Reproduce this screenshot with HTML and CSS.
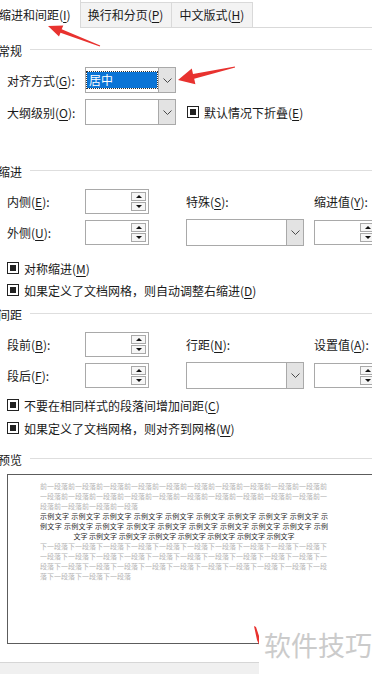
FILE: index.html
```html
<!DOCTYPE html>
<html lang="zh-CN">
<head>
  <meta charset="UTF-8">
  <meta name="viewport" content="width=device-width, initial-scale=1.0">
  <title>段落</title>
  <link rel="stylesheet" href="styles.css">
</head>
<body>
  <div class="dialog">
    <div class="tabs">
      <div class="tab active">缩进和间距(<u>I</u>)</div>
      <div class="tab">换行和分页(<u>P</u>)</div>
      <div class="tab">中文版式(<u>H</u>)</div>
    </div>

    <div class="content">
      <div class="group-title">常规</div>
      <div class="grid general">
        <label>对齐方式(<u>G</u>):</label>
        <div class="select">
          <span class="value"><span class="selected">居中</span></span>
          <span class="drop"><svg width="9" height="5" viewBox="0 0 9 5"><path d="M0.5 0.5 L4.5 4.5 L8.5 0.5" fill="none" stroke="#4a4a4a"/></svg></span>
        </div>
        <span></span>
        <label>大纲级别(<u>O</u>):</label>
        <div class="select">
          <span class="value"></span>
          <span class="drop"><svg width="9" height="5" viewBox="0 0 9 5"><path d="M0.5 0.5 L4.5 4.5 L8.5 0.5" fill="none" stroke="#4a4a4a"/></svg></span>
        </div>
        <div class="check"><span class="box"></span><span>默认情况下折叠(<u>E</u>)</span></div>
      </div>

      <div class="group-title indent-title">缩进</div>
      <div class="grid fields">
        <label>内侧(<u>E</u>):</label>
        <div class="spin"><span class="spin-btns"><span class="up"></span><span class="down"></span></span></div>
        <label>特殊(<u>S</u>):</label>
        <label>缩进值(<u>Y</u>):</label>
        <label>外侧(<u>U</u>):</label>
        <div class="spin"><span class="spin-btns"><span class="up"></span><span class="down"></span></span></div>
        <div class="select wide">
          <span class="value"></span>
          <span class="drop"><svg width="9" height="5" viewBox="0 0 9 5"><path d="M0.5 0.5 L4.5 4.5 L8.5 0.5" fill="none" stroke="#4a4a4a"/></svg></span>
        </div>
        <div class="spin"><span class="spin-btns"><span class="up"></span><span class="down"></span></span></div>
      </div>
      <div class="checks first">
        <div class="check"><span class="box"></span><span>对称缩进(<u>M</u>)</span></div>
        <div class="check"><span class="box"></span><span>如果定义了文档网格，则自动调整右缩进(<u>D</u>)</span></div>
      </div>

      <div class="group-title">间距</div>
      <div class="grid fields">
        <label>段前(<u>B</u>):</label>
        <div class="spin"><span class="spin-btns"><span class="up"></span><span class="down"></span></span></div>
        <label>行距(<u>N</u>):</label>
        <label>设置值(<u>A</u>):</label>
        <label>段后(<u>F</u>):</label>
        <div class="spin"><span class="spin-btns"><span class="up"></span><span class="down"></span></span></div>
        <div class="select wide">
          <span class="value"></span>
          <span class="drop"><svg width="9" height="5" viewBox="0 0 9 5"><path d="M0.5 0.5 L4.5 4.5 L8.5 0.5" fill="none" stroke="#4a4a4a"/></svg></span>
        </div>
        <div class="spin"><span class="spin-btns"><span class="up"></span><span class="down"></span></span></div>
      </div>
      <div class="checks">
        <div class="check"><span class="box"></span><span>不要在相同样式的段落间增加间距(<u>C</u>)</span></div>
        <div class="check"><span class="box"></span><span>如果定义了文档网格，则对齐到网格(<u>W</u>)</span></div>
      </div>

      <div class="group-title preview-title">预览</div>
      <div class="preview">
        <div class="pv-line muted">前一段落前一段落前一段落前一段落前一段落前一段落前一段落前一段落前一段落前一段落前</div>
        <div class="pv-line muted">一段落前一段落前一段落前一段落前一段落前一段落前一段落前一段落前一段落前一段落前一</div>
        <div class="pv-line muted">段落前一段落前一段落前一段落</div>
        <div class="pv-line sample full">示例文字 示例文字 示例文字 示例文字 示例文字 示例文字 示例文字 示例文字 示例文字 示</div>
        <div class="pv-line sample full">例文字 示例文字 示例文字 示例文字 示例文字 示例文字 示例文字 示例文字 示例文字 示例</div>
        <div class="pv-line sample center">文字 示例文字 示例文字 示例文字 示例文字 示例文字 示例文字 示例文字</div>
        <div class="pv-line muted">下一段落下一段落下一段落下一段落下一段落下一段落下一段落下一段落下一段落下一段落下</div>
        <div class="pv-line muted">一段落下一段落下一段落下一段落下一段落下一段落下一段落下一段落下一段落下一段落下一</div>
        <div class="pv-line muted">段落下一段落下一段落下一段落下一段落下一段落下一段落下一段落下一段落下一段落下一段</div>
        <div class="pv-line muted">落下一段落下一段落下一段落</div>
      </div>
    </div>

    <div class="footer"></div>

    <!-- red annotation arrows drawn on top of the screenshot -->
    <svg class="marks" width="372" height="675" viewBox="0 0 372 675">
      <polygon fill="#e8322f" points="48,26 63.3,25.4 61.7,29.3 100.2,45.5 99.8,46.5 60.5,32.7 59,36.6"/>
      <polygon fill="#e8322f" points="178,80 191.8,68.6 193,74 234.9,66.5 235.1,67.5 194.2,78.8 195.4,84.2"/>
      <polygon fill="#e8322f" points="254,626 256,627 260,639 260,647 257,640"/>
    </svg>
    <div class="watermark">软件技巧</div>
  </div>
</body>
</html>
```

FILE: styles.css
```css
* {
  box-sizing: border-box;
}
body {
  margin: 0;
  background: #fff;
  font-family: "Noto Sans CJK SC", sans-serif;
  font-size: 12px;
  color: #1a1a1a;
}
u {
  text-decoration-thickness: 1px;
  text-underline-offset: 2px;
}
.dialog {
  position: relative;
  width: 372px;
  height: 675px;
  overflow: hidden;
}
.tabs {
  display: flex;
  align-items: flex-end;
  height: 28px;
  border-bottom: 1px solid #d9d9d9;
}
.tab {
  height: 25px;
  line-height: 23px;
  padding: 0 8px 0 7px;
  background: #f3f3f3;
  border-top: 1px solid #d9d9d9;
  border-right: 1px solid #d9d9d9;
  white-space: nowrap;
}
.tab.active {
  height: 28px;
  line-height: 29px;
  margin-bottom: -1px;
  margin-left: -1px;
  padding: 0 9px 0 0;
  background: #fff;
  border-top: none;
}
.content {
  padding-left: 7px;
}
.group-title {
  display: flex;
  align-items: center;
  gap: 8px;
  height: 16px;
  line-height: 16px;
  margin-left: -9px;
  margin-top: 15px;
}
.group-title::after {
  content: "";
  flex: 1;
  height: 1px;
  margin-top: -3px;
  background: #dedede;
}
.group-title.indent-title {
  margin-top: 39px;
}
.grid {
  display: grid;
  align-items: center;
  margin-top: 8px;
}
.grid label {
  white-space: nowrap;
}
.general {
  grid-template-columns: 78px 102px auto;
  grid-auto-rows: 26px;
  row-gap: 6px;
}
.fields {
  grid-template-columns: 78px 101px 128px 64px;
  grid-auto-rows: 26px;
  row-gap: 5px;
}
.select {
  display: flex;
  width: 91px;
  height: 26px;
  border: 1px solid #a9a9a9;
  background: #fff;
}
.select.wide {
  width: 118px;
  height: 27px;
}
.select .value {
  flex: 1;
  display: flex;
  padding: 4px 1px 4px 1px;
}
.selected {
  flex: 1;
  background: #0a74d6;
  color: #fff;
  line-height: 15px;
  padding-left: 2px;
  outline: 1px dotted #333;
}
.select .drop {
  width: 17px;
  display: flex;
  align-items: center;
  justify-content: center;
  background: #e3e3e3;
  border-left: 1px solid #a9a9a9;
}
.spin {
  display: flex;
  justify-content: flex-end;
  width: 64px;
  height: 25px;
  padding: 2px;
  border: 1px solid #a9a9a9;
  background: #fff;
}
.spin-btns {
  display: flex;
  flex-direction: column;
  gap: 1px;
  width: 15px;
}
.spin-btns span {
  flex: 1;
  display: flex;
  align-items: center;
  justify-content: center;
  border: 1px solid #a9a9a9;
  background: #f6f6f6;
}
.spin-btns .up::after {
  content: "";
  border-left: 3px solid transparent;
  border-right: 3px solid transparent;
  border-bottom: 3px solid #111;
}
.spin-btns .down::after {
  content: "";
  border-left: 3px solid transparent;
  border-right: 3px solid transparent;
  border-top: 3px solid #111;
}
.check {
  display: flex;
  align-items: center;
  gap: 5px;
  height: 16px;
  white-space: nowrap;
}
.check .box {
  width: 12px;
  height: 12px;
  border: 1px solid #222;
  padding: 2px;
  background-clip: content-box;
  background-color: #222;
}
.checks {
  display: flex;
  flex-direction: column;
  gap: 7px;
  margin-top: 9px;
}
.checks.first {
  margin-top: 15px;
  gap: 6px;
}
.checks + .group-title {
  margin-top: 9px;
}
.preview-title {
  margin-top: 16px !important;
}
.preview {
  width: 380px;
  height: 170px;
  margin-top: 6px;
  padding: 6px 0 0 32px;
  border: 1px solid #5c5c5c;
}
.pv-line {
  width: 288px;
  height: 10px;
  line-height: 10px;
  font-size: 7px;
  white-space: nowrap;
  overflow: hidden;
}
.muted {
  color: #b5b5b5;
}
.sample {
  color: #2a2a2a;
}
.sample.full {
  text-align: justify;
  text-align-last: justify;
}
.sample.center {
  text-align: center;
}
.footer {
  margin-top: 18px;
  height: 12px;
  background: #f0f0f0;
  border-top: 1px solid #d6d6d6;
}
.marks {
  position: absolute;
  top: 0;
  left: 0;
  pointer-events: none;
}
.watermark {
  position: absolute;
  right: 0;
  bottom: 0;
  width: 113px;
  height: 56px;
  padding: 11px 0 0 5px;
  background: #fff;
  color: #cbcbcb;
  font-size: 27px;
  line-height: 30px;
  white-space: nowrap;
}
```
